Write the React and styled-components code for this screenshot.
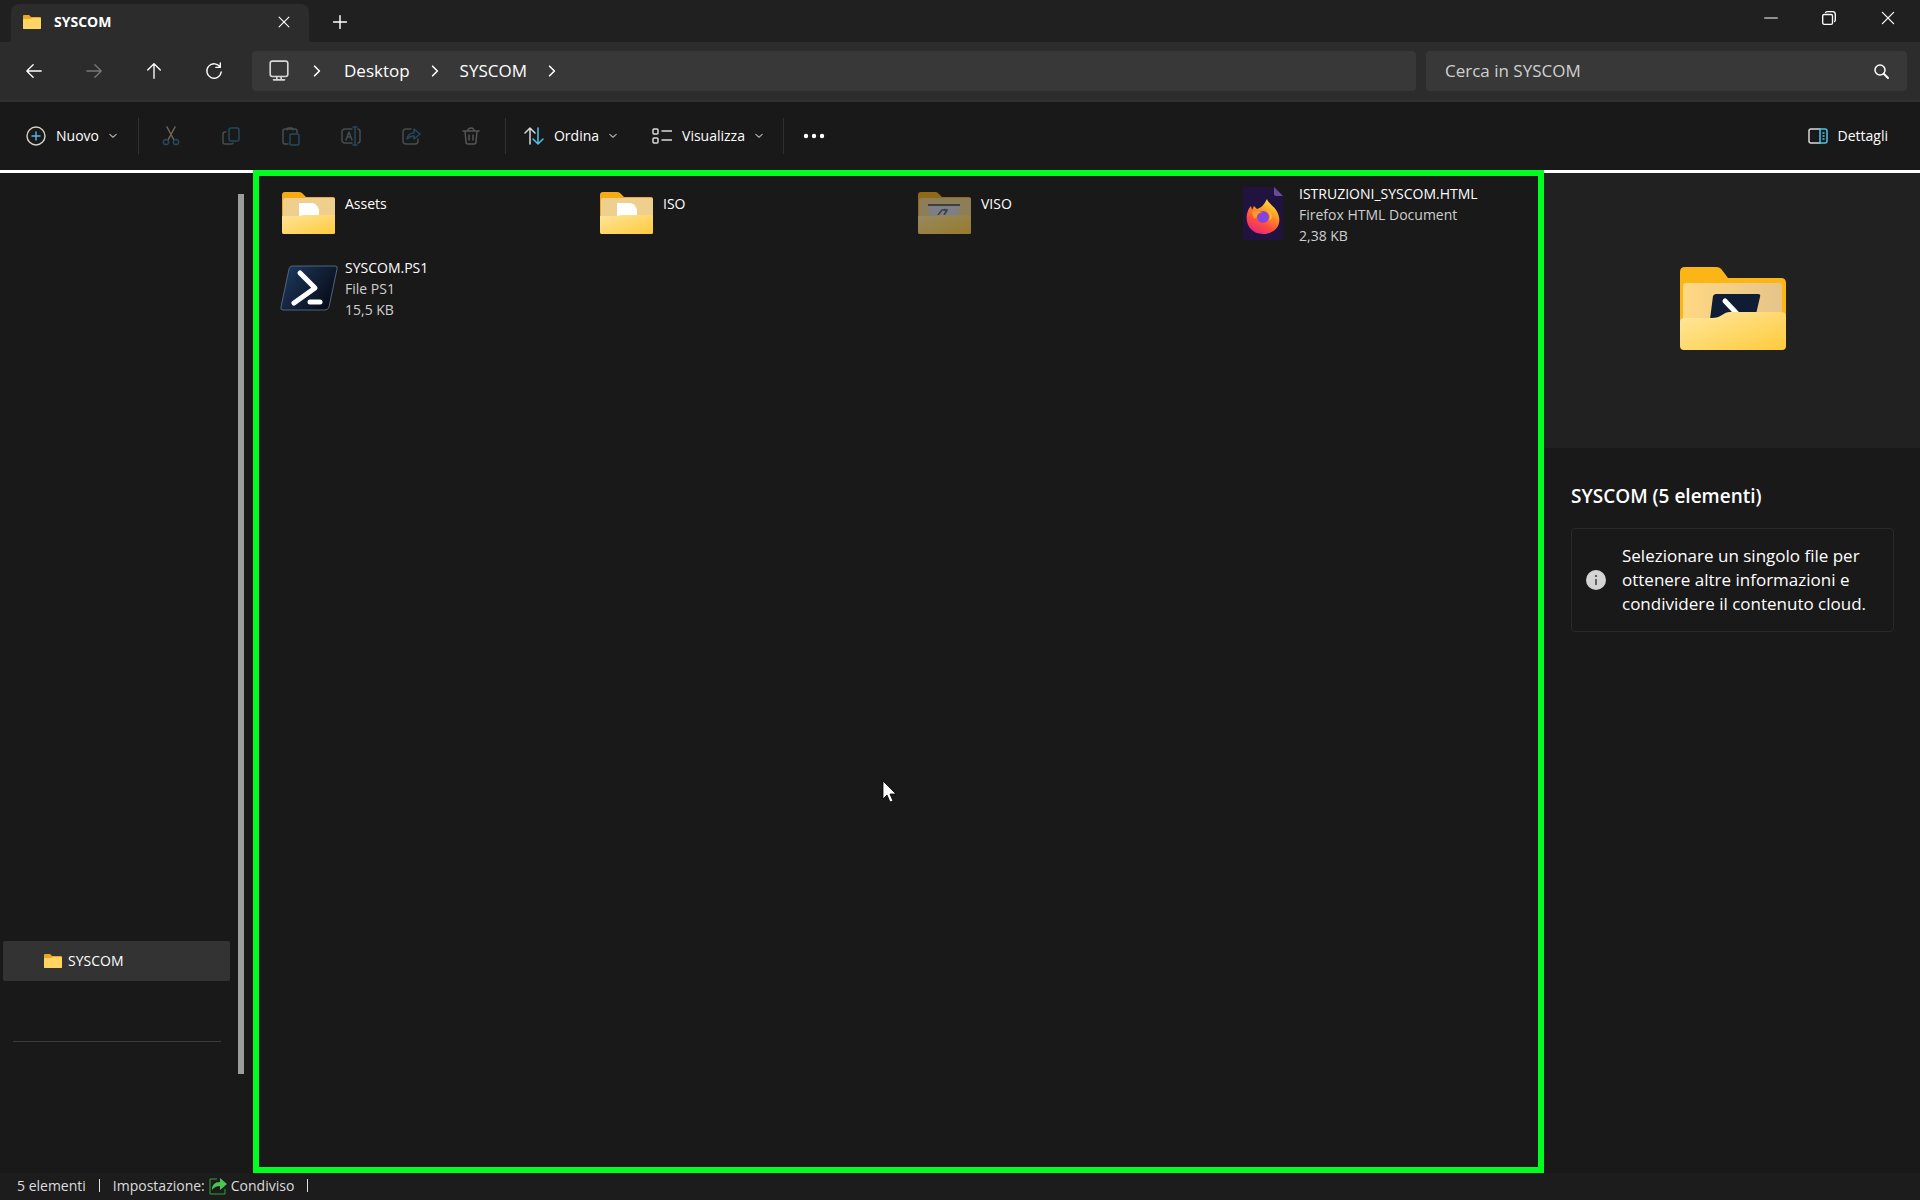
import React from "react";
import styled, { createGlobalStyle } from "styled-components";

const Global = createGlobalStyle`
  * { box-sizing: border-box; }
  body {
    margin: 0;
    background: #191919;
    color: #fff;
    font-family: "Open Sans", "Noto Sans", sans-serif;
    font-size: 14px;
    line-height: 20px;
  }
  button, input { font: inherit; color: inherit; }
  svg { display: block; flex: none; }
`;

const Window = styled.div`
  min-height: 100vh;
  display: flex;
  flex-direction: column;
`;

const TitleBar = styled.header`
  height: 42px;
  display: flex;
  align-items: stretch;
  background: #202020;
  padding-left: 11px;
`;

const Tab = styled.div`
  width: 298px;
  margin-top: 4px;
  padding: 0 15px 2px 12px;
  display: flex;
  align-items: center;
  gap: 13px;
  background: #2c2c2c;
  border-radius: 8px 8px 0 0;
`;

const TabTitle = styled.span`
  flex: 1;
  font-weight: 700;
`;

const IconButton = styled.button`
  width: ${(p) => p.$w || 20}px;
  height: ${(p) => p.$h || 20}px;
  padding: 0;
  display: flex;
  align-items: center;
  justify-content: center;
  background: none;
  border: 0;
  border-radius: 4px;
  flex: none;
`;

const WindowControls = styled.div`
  margin-left: auto;
  display: flex;
  padding-right: 2px;
`;

const NavBar = styled.div`
  height: 60px;
  display: flex;
  align-items: center;
  background: #2c2c2c;
  border-bottom: 2px solid #303030;
  padding: 0 13px 0 4px;
`;

const Field = styled.div`
  height: 40px;
  display: flex;
  align-items: center;
  background: #383838;
  border-radius: 4px;
  font-size: 17px;
  line-height: 24px;
`;

const Address = styled(Field).attrs({ as: "nav" })`
  flex: 1148;
  margin-left: 8px;
  padding-left: 16px;
`;

const CrumbToggle = styled(IconButton)`
  margin-left: 17px;
`;

const Crumb = styled.a`
  color: #fff;
  text-decoration: none;
  margin: 0 17px;
`;

const Search = styled(Field).attrs({ as: "label" })`
  flex: 446;
  margin-left: 10px;
  padding: 0 16px 0 19px;
`;

const SearchInput = styled.input`
  flex: 1;
  min-width: 0;
  background: none;
  border: 0;
  outline: 0;
  padding: 0;
  &::placeholder { color: #d0d0d0; opacity: 1; }
`;

const Toolbar = styled.div`
  height: 68px;
  display: flex;
  align-items: center;
  padding: 0 24px 0 18px;
`;

const Command = styled.button`
  height: 40px;
  display: flex;
  align-items: center;
  gap: 10px;
  padding: 0 8px;
  background: none;
  border: 0;
`;

const Divider = styled.span`
  width: 1px;
  height: 36px;
  background: #303030;
`;

const Group = styled.div`
  display: flex;
  align-items: center;
  gap: 19px;
  padding: 0 ${(p) => p.$end || 0}px 0 ${(p) => p.$start || 0}px;
`;

const Tools = styled.div`
  display: flex;
  padding: 0 4px 0 2px;
`;

const Spacer = styled.span`
  flex: 1;
`;

const Body = styled.main`
  flex: 1;
  display: flex;
`;

const Sidebar = styled.aside`
  width: 253px;
  display: flex;
  border-top: 3px solid #fff;
`;

const Tree = styled.nav`
  flex: 1;
  display: flex;
  flex-direction: column;
  justify-content: flex-end;
  padding: 0 8px 131px 3px;
`;

const TreeItem = styled.a`
  height: 40px;
  display: flex;
  align-items: center;
  gap: 6px;
  padding-left: 41px;
  background: #333;
  border-radius: 2px;
  color: #fff;
  text-decoration: none;
`;

const TreeRule = styled.hr`
  width: auto;
  height: 1px;
  margin: 60px 9px 0 10px;
  border: 0;
  background: #3a3a3a;
`;

const ScrollThumb = styled.div`
  width: 6px;
  margin: 21px 9px 99px 0;
  background: #9c9c9c;
`;

const Files = styled.ul`
  flex: 1;
  min-width: 0;
  margin: 0;
  padding: 1px 0 0 19px;
  list-style: none;
  border: 6px solid #00ff1e;
  display: grid;
  grid-template-columns: repeat(auto-fill, 300px);
  column-gap: 18px;
  grid-auto-rows: 74px;
  align-content: start;
`;

const FileItem = styled.li`
  display: flex;
  align-items: center;
  gap: 5px;
`;

const FileText = styled.div`
  line-height: 21px;
  min-height: 42px;
  color: #cfcfcf;
  white-space: nowrap;
`;

const FileName = styled.div`
  color: #fff;
`;

const Details = styled.aside`
  width: 376px;
  border-top: 3px solid #fff;
`;

const Preview = styled.div`
  height: 275px;
  display: flex;
  align-items: center;
  justify-content: center;
  padding: 0 0 4px 2px;
  background: #212121;
`;

const DetailsBody = styled.div`
  padding: 36px 26px 0 27px;
`;

const DetailsTitle = styled.h2`
  margin: 0 0 20px;
  font-size: 19px;
  line-height: 24px;
  font-weight: 600;
`;

const Notice = styled.div`
  display: flex;
  align-items: center;
  gap: 16px;
  padding: 15px 14px;
  border: 1px solid #292929;
  border-radius: 4px;
  font-size: 17px;
  line-height: 24px;
`;

const StatusBar = styled.footer`
  height: 27px;
  display: flex;
  align-items: center;
  gap: 13px;
  padding: 0 17px 2px;
  background: #1c1c1c;
  color: #dcdcdc;
`;

const StatusGroup = styled.span`
  display: flex;
  align-items: center;
  gap: 4px;
`;

const Bar = styled.span`
  width: 1px;
  height: 13px;
  background: #e0e0e0;
`;

const Pointer = styled.svg`
  position: absolute;
  left: 882px;
  top: 780px;
`;

const Line = ({ s = 20, c = "#fff", w = 1.5, children }) => (
  <svg width={s} height={s} viewBox="0 0 20 20" fill="none" stroke={c} strokeWidth={w} strokeLinecap="round" strokeLinejoin="round" aria-hidden="true">
    {children}
  </svg>
);

const Chevron = () => (
  <Line s={16} w={2}><path d="M7 4l6 6-6 6" /></Line>
);
const Down = () => (
  <Line s={8} c="#aaa" w={3}><path d="M2 6l8 7 8-7" /></Line>
);
const Cross = ({ s }) => (
  <Line s={s} w={1.6}><path d="M3 3l14 14M17 3L3 17" /></Line>
);

const MiniFolder = () => (
  <svg width="18" height="16" viewBox="0 0 18 16" aria-hidden="true">
    <path d="M0 2q0-1 1-1h5l2 2h9q1 0 1 1v10q0 1-1 1H1q-1 0-1-1z" fill="#e9a820" />
    <path d="M0 6q0-1 1-1h6l2-1h8q1 0 1 1v9q0 1-1 1H1q-1 0-1-1z" fill="#ffd463" />
  </svg>
);

const Folder = ({ kind, dim }) => (
  <svg width="62" height="56" viewBox="-4 -5 62 56" opacity={dim ? 0.55 : 1} aria-hidden="true">
    <defs>
      <linearGradient id="front" x1="0" y1="0" x2="1" y2="1">
        <stop offset="0" stopColor="#ffe49a" />
        <stop offset="1" stopColor="#ffcb3c" />
      </linearGradient>
    </defs>
    <path d="M0 4q0-3 3-3h14q2 0 3 1l4 4h27q2 0 2 2v34q0 1-2 1H2q-2 0-2-2z" fill="#f5ab14" />
    <path d="M1 9q0-2 2-2h49q1 0 1 2v18H1z" fill="#efcf8e" />
    {kind === "drive" ? (
      <>
        <path d="M11 15h30v11H11z" fill="#cfd3dc" />
        <path d="M10 14h32" stroke="#34415c" strokeWidth="1.6" />
        <path d="M20 24l4-5h5l-3 5M26 18l3 3" stroke="#535f74" strokeWidth="1.6" fill="none" />
      </>
    ) : (
      <path d="M17 12h14q5 2 6 7v7H17z" fill="#fff" />
    )}
    <path d="M0 25h17q2 0 4-1h32v17q0 2-2 2H2q-2 0-2-2z" fill="url(#front)" />
  </svg>
);

const PowerShell = () => (
  <svg width="62" height="56" viewBox="-4 -5 62 56" aria-hidden="true">
    <defs>
      <linearGradient id="ps" x1="0" y1="0" x2="1" y2="0.6">
        <stop offset="0" stopColor="#1e3c63" />
        <stop offset="1" stopColor="#080d1a" />
      </linearGradient>
    </defs>
    <path d="M10 1h43q3 0 2 3l-8 38q-1 3-4 3H1q-3 0-2-3L7 4q1-3 3-3z" fill="url(#ps)" stroke="#51647a" />
    <path d="M18 8l15 15-21 15" stroke="#fff" strokeWidth="5" fill="none" strokeLinecap="round" strokeLinejoin="round" />
    <path d="M28 37h10" stroke="#fff" strokeWidth="5" strokeLinecap="round" />
  </svg>
);

const Firefox = () => (
  <svg width="62" height="56" viewBox="-4 0 62 56" aria-hidden="true">
    <defs>
      <linearGradient id="fx" x1="0.8" y1="0" x2="0.3" y2="1">
        <stop offset="0" stopColor="#fff04a" />
        <stop offset="0.35" stopColor="#ffa024" />
        <stop offset="0.7" stopColor="#ff4c3e" />
        <stop offset="1" stopColor="#e5257d" />
      </linearGradient>
    </defs>
    <path d="M9 1h29l9 9v43q0 1-2 1H9q-2 0-2-2V3q0-2 2-2z" fill="#21133f" />
    <path d="M38 1l9 9h-7q-2 0-2-2z" fill="#6a4a9c" />
    <path d="M31 13c1 4 6 6 9 11 8 12 1 24-13 24C15 48 9 38 11 28c1-4 2-6 4-8l1 4 2-4 3 3c4-1 7-4 10-10z" fill="url(#fx)" />
    <circle cx="27" cy="31" r="6" fill="#8544dd" />
    <path d="M16 26c4-2 7-1 10 1-4 0-5 2-5 4l-3 2z" fill="#ff9a28" />
    <path d="M31 25c3 2 4 6 2 9 1 0 3-1 3-3 1-3-2-6-5-6z" fill="#ffbc2e" />
  </svg>
);

const PreviewFolder = () => (
  <svg width="106" height="84" viewBox="0 0 106 84" aria-hidden="true">
    <defs>
      <linearGradient id="big" x1="0" y1="0" x2="1" y2="1">
        <stop offset="0" stopColor="#ffe79f" />
        <stop offset="1" stopColor="#ffcb3c" />
      </linearGradient>
      <linearGradient id="bigBack" x1="0" y1="0" x2="1" y2="0">
        <stop offset="0" stopColor="#ffd882" />
        <stop offset="1" stopColor="#e6c48a" />
      </linearGradient>
    </defs>
    <path d="M0 5q0-5 5-5h31q4 0 6 3l6 8h53q5 0 5 5v60H0z" fill="#fbb615" />
    <path d="M3 19q0-3 3-3h93q3 0 3 3v36H3z" fill="url(#bigBack)" />
    <path d="M36 27h42q3 0 2 3l-7 30H29l4-31q1-2 3-2z" fill="#101c33" />
    <path d="M45 34l17 18" stroke="#fff" strokeWidth="5" strokeLinecap="round" />
    <path d="M0 55q0-4 4-4h28q6 0 10-3t7-3h52q5 0 5 4v30q0 4-4 4H4q-4 0-4-4z" fill="url(#big)" />
  </svg>
);

const grey = "#454d50";
const blue = "#24485c";

const tools = [
  ["Taglia", <><path d="M6 1l7 13M14 1L7 14" stroke="#6b6a58" /><circle cx="5" cy="16" r="2.6" /><circle cx="15" cy="16" r="2.6" /></>],
  ["Copia", <><rect x="8" y="2" width="10" height="13" rx="2" /><path d="M5 6H4q-2 0-2 2v8q0 2 2 2h6q2 0 2-1" stroke={grey} /></>],
  ["Incolla", <><path d="M7 18H4q-2 0-2-2V5q0-2 2-2h10q2 0 2 2v2M6 4q0-2 1-2h4q1 0 1 2" stroke={grey} /><rect x="9" y="8" width="9" height="11" rx="1.5" /></>],
  ["Rinomina", <><path d="M11 3H4Q1 3 1 6v8q0 3 3 3h7M17 3q2 0 2 3v8q0 3-2 3M5 14l3-8 3 8M6 11h4" stroke={grey} /><path d="M14 1v18M12 1h4M12 19h4" /></>],
  ["Condividi", <><path d="M10 3H5Q2 3 2 6v9q0 3 3 3h9q3 0 3-3v-2" stroke={grey} /><path d="M6 13q1-6 7-6V3l6 5-6 5v-3q-4 0-7 3z" /></>],
  ["Elimina", <path d="M2 5h16M7 5q0-3 3-3t3 3M4 5l1 11q0 2 2 2h6q2 0 2-2l1-11M8 9v5M12 9v5" stroke="#555" />],
];

const files = [
  { name: "Assets", icon: <Folder /> },
  { name: "ISO", icon: <Folder /> },
  { name: "VISO", icon: <Folder kind="drive" dim /> },
  { name: "ISTRUZIONI_SYSCOM.HTML", icon: <Firefox />, type: "Firefox HTML Document", size: "2,38 KB" },
  { name: "SYSCOM.PS1", icon: <PowerShell />, type: "File PS1", size: "15,5 KB" },
];

export default function App() {
  return (
    <Window>
      <Global />
      <TitleBar>
        <Tab>
          <MiniFolder />
          <TabTitle>SYSCOM</TabTitle>
          <IconButton aria-label="Chiudi scheda"><Cross s={14} /></IconButton>
        </Tab>
        <IconButton $w={62} $h={44} aria-label="Nuova scheda">
          <Line s={16} w={1.8}><path d="M10 2v16M2 10h16" /></Line>
        </IconButton>
        <WindowControls>
          <IconButton $w={58} $h={36} aria-label="Riduci a icona"><Line s={14} w={1.6}><path d="M1 10h18" /></Line></IconButton>
          <IconButton $w={58} $h={36} aria-label="Ripristina">
            <Line s={14} w={1.9}><rect x="1" y="5" width="14" height="14" rx="2" /><path d="M5 2q1-1 3-1h7q4 0 4 4v7q0 2-1 3" /></Line>
          </IconButton>
          <IconButton $w={60} $h={36} aria-label="Chiudi"><Cross s={16} /></IconButton>
        </WindowControls>
      </TitleBar>

      <NavBar>
        <IconButton $w={60} $h={40} aria-label="Indietro"><Line s={18}><path d="M18 10H2M9 3l-7 7 7 7" /></Line></IconButton>
        <IconButton $w={60} $h={40} aria-label="Avanti"><Line s={18} c="#777"><path d="M2 10h16M11 3l7 7-7 7" /></Line></IconButton>
        <IconButton $w={60} $h={40} aria-label="Su"><Line s={18}><path d="M10 18V2M3 9l7-7 7 7" /></Line></IconButton>
        <IconButton $w={60} $h={40} aria-label="Aggiorna"><Line s={18}><path d="M17 6A8 8 0 1 0 18 11M17 1v5h-5" /></Line></IconButton>
        <Address aria-label="Percorso">
          <Line s={22} c="#d6d6d6"><rect x="2" y="1" width="16" height="14" rx="2" /><path d="M8 15v3M12 15v3M5 18h10" /></Line>
          <CrumbToggle aria-label="Espandi"><Chevron /></CrumbToggle>
          <Crumb href="#desktop">Desktop</Crumb>
          <Chevron />
          <Crumb href="#syscom">SYSCOM</Crumb>
          <Chevron />
        </Address>
        <Search>
          <SearchInput type="search" placeholder="Cerca in SYSCOM" aria-label="Cerca in SYSCOM" />
          <Line s={20}><circle cx="9" cy="9" r="5" /><path d="M13 13l4 4" strokeWidth="2" /></Line>
        </Search>
      </NavBar>

      <Toolbar>
        <Group $end={13}>
          <Command>
            <Line c="#d9d0c8" w={1.4}><circle cx="10" cy="10" r="9" /><path d="M10 6v8M6 10h8" stroke="#58b4ea" /></Line>
            Nuovo
            <Down />
          </Command>
        </Group>
        <Divider />
        <Tools>
          {tools.map(([label, art]) => (
            <IconButton key={label} $w={60} $h={40} aria-label={label} disabled>
              <Line c={blue}>{art}</Line>
            </IconButton>
          ))}
        </Tools>
        <Divider />
        <Group $start={10} $end={12}>
          <Command>
            <Line c="#d9d9d9"><path d="M6 18V2M1 7l5-5 5 5" /><path d="M14 2v16M9 13l5 5 5-5" stroke="#4cc2e8" /></Line>
            Ordina
            <Down />
          </Command>
          <Command>
            <Line c="#d9d9d9"><rect x="1" y="3" width="5" height="5" rx="1" /><rect x="1" y="12" width="5" height="5" rx="1" /><path d="M10 5h10M10 14h10" /></Line>
            Visualizza
            <Down />
          </Command>
        </Group>
        <Divider />
        <IconButton $w={60} $h={40} aria-label="Altro">
          <svg width="22" height="6" viewBox="0 0 22 6" fill="#fff" aria-hidden="true"><circle cx="3" cy="3" r="2.2" /><circle cx="11" cy="3" r="2.2" /><circle cx="19" cy="3" r="2.2" /></svg>
        </IconButton>
        <Spacer />
        <Command>
          <Line c="#d9d9d9"><path d="M12 3H3Q1 3 1 5v10q0 2 2 2h9" /><path d="M12 3h5q2 0 2 2v10q0 2-2 2h-5zM15 7h1M15 10h1M15 13h1" stroke="#4cc2e8" /></Line>
          Dettagli
        </Command>
      </Toolbar>

      <Body>
        <Sidebar>
          <Tree aria-label="Cartelle">
            <TreeItem href="#syscom"><MiniFolder />SYSCOM</TreeItem>
            <TreeRule />
          </Tree>
          <ScrollThumb />
        </Sidebar>
        <Files>
          {files.map((f) => (
            <FileItem key={f.name}>
              {f.icon}
              <FileText>
                <FileName>{f.name}</FileName>
                {f.type && <div>{f.type}</div>}
                {f.size && <div>{f.size}</div>}
              </FileText>
            </FileItem>
          ))}
        </Files>
        <Details>
          <Preview><PreviewFolder /></Preview>
          <DetailsBody>
            <DetailsTitle>SYSCOM (5 elementi)</DetailsTitle>
            <Notice>
              <svg width="20" height="20" viewBox="0 0 20 20" aria-hidden="true">
                <circle cx="10" cy="10" r="10" fill="#d4d4d4" />
                <path d="M10 9v6" stroke="#333" strokeWidth="1.4" />
                <circle cx="10" cy="6" r="1" fill="#333" />
              </svg>
              <span>Selezionare un singolo file per ottenere altre informazioni e condividere il contenuto cloud.</span>
            </Notice>
          </DetailsBody>
        </Details>
      </Body>

      <StatusBar>
        <span>5 elementi</span>
        <Bar />
        <StatusGroup>
          Impostazione:
          <svg width="18" height="18" viewBox="0 0 18 18" aria-hidden="true">
            <path d="M8 2H1v15h15v-5" fill="none" stroke="#2f9e3c" />
            <path d="M3 13q0-8 8-8V1l7 6-7 6V9q-5 0-8 4z" fill="#4cc552" />
          </svg>
          Condiviso
        </StatusGroup>
        <Bar />
      </StatusBar>
      <Pointer width="15" height="24" viewBox="0 0 15 24" aria-hidden="true">
        <path d="M1 1v18l4-4 3 7 3-1-3-7h6z" fill="#fff" stroke="#000" strokeWidth="0.8" />
      </Pointer>
    </Window>
  );
}
